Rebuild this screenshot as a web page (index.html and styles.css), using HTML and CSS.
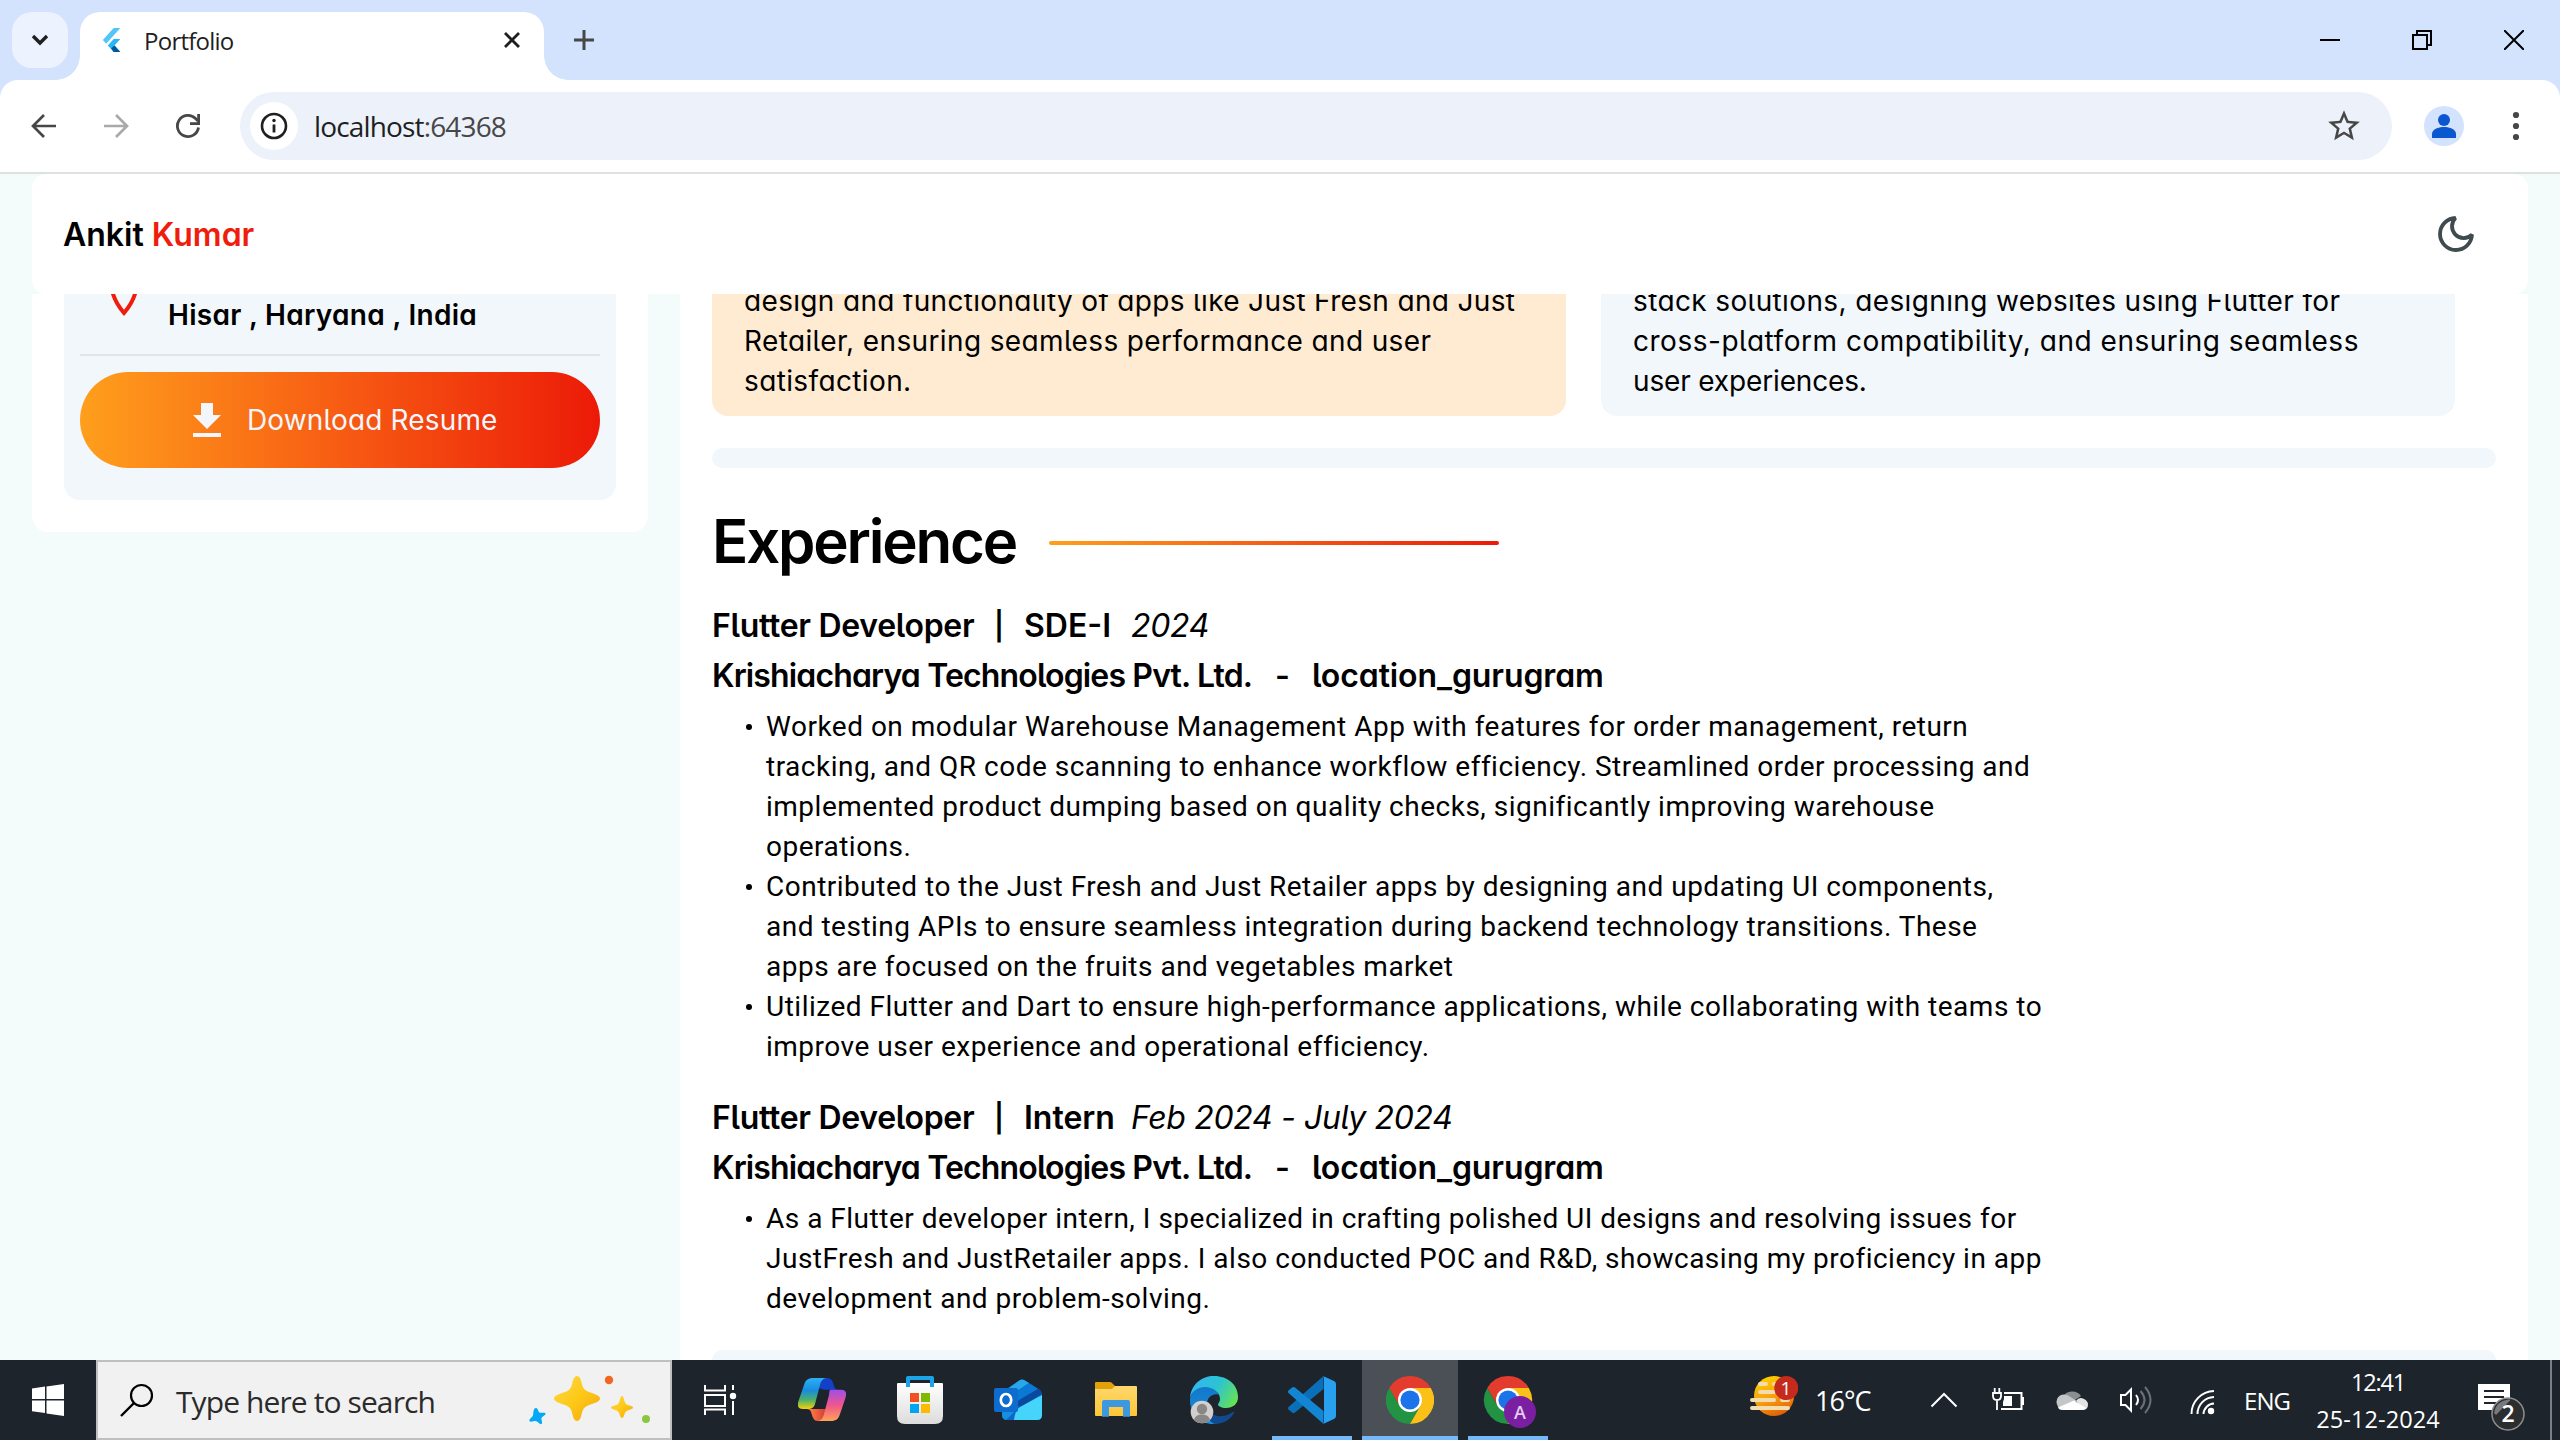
FILE: index.html
```
<!DOCTYPE html>
<html lang="en">
<head>
<meta charset="utf-8">
<title>Portfolio</title>
<link rel="stylesheet" href="styles.css">
</head>
<body>

<header class="browser">
  <div class="tabstrip">
    <button class="tab-search" aria-label="Search tabs"><svg width="20" height="14" viewBox="0 0 20 14"><path d="M3 3l7 7 7-7" fill="none" stroke="#1f1f1f" stroke-width="3.4"/></svg></button>
    <div class="tab">
      <svg class="favicon" width="20" height="24" viewBox="0 0 24 26" preserveAspectRatio="none"><path d="M14 0h8L5 17l-4-4z" fill="#54c5f8"/><path d="M14 12h8l-7 7 7 7h-8l-7-7z" fill="#29b6f6"/><path d="M11 22l4-3 7 7h-8z" fill="#01579b"/></svg>
      <span class="tab-title">Portfolio</span>
      <svg class="tab-close" width="16" height="16" viewBox="0 0 16 16"><path d="M1 1l14 14M15 1L1 15" stroke="#1f1f1f" stroke-width="2.8"/></svg>
    </div>
    <svg class="new-tab" width="20" height="20" viewBox="0 0 20 20"><path d="M10 0v20M0 10h20" stroke="#474747" stroke-width="3"/></svg>
    <div class="window-controls">
      <svg width="20" height="20" viewBox="0 0 20 20"><path d="M0 10h20" stroke="#000" stroke-width="2"/></svg>
      <svg width="20" height="20" viewBox="0 0 20 20"><path d="M1 5h14v14H1zM5 5V1h14v14h-4" fill="none" stroke="#000" stroke-width="2"/></svg>
      <svg width="20" height="20" viewBox="0 0 20 20"><path d="M0 0l20 20M20 0L0 20" stroke="#000" stroke-width="2"/></svg>
    </div>
  </div>
  <div class="toolbar">
    <svg class="nav-back" width="26" height="26" viewBox="0 0 26 26"><path d="M25 13H2.500M13 2L2 13l11 11" fill="none" stroke="#474747" stroke-width="2.700"/></svg>
    <svg class="nav-forward" width="26" height="26" viewBox="0 0 26 26"><path d="M1 13h22.500M13 2l11 11-11 11" fill="none" stroke="#a9a9a9" stroke-width="2.700"/></svg>
    <svg class="nav-reload" width="26" height="26" viewBox="0 0 26 26"><path d="M23.500 14.500A10.600 10.600 0 1 1 20.500 5.500L23 8" fill="none" stroke="#474747" stroke-width="2.800"/><path d="M23.600 1v9.600H15" fill="none" stroke="#474747" stroke-width="2.800"/></svg>
    <div class="omnibox">
      <span class="site-info"><svg width="28" height="28" viewBox="0 0 28 28"><circle cx="14" cy="14" r="12" fill="none" stroke="#1f1f1f" stroke-width="2.600"/><path d="M14 12.500v8" stroke="#1f1f1f" stroke-width="2.800"/><circle cx="14" cy="8.500" r="1.700" fill="#1f1f1f"/></svg></span>
      <span class="url">localhost<span class="port">:64368</span></span>
      <svg class="star" width="38" height="38" viewBox="0 0 24 24"><path d="M22 9.240l-7.190-.620L12 2 9.190 8.630 2 9.240l5.460 4.730L5.820 21 12 17.270 18.180 21l-1.630-7.030L22 9.240zM12 15.400l-3.760 2.270 1-4.280-3.320-2.880 4.380-.380L12 6.100l1.710 4.040 4.380.380-3.320 2.880 1 4.280L12 15.400z" fill="#474747"/></svg>
    </div>
    <svg class="avatar" width="40" height="40" viewBox="0 0 40 40"><circle cx="20" cy="20" r="20" fill="#d3e3fd"/><circle cx="20" cy="14" r="6" fill="#0b57d0"/><path d="M8 32v-4c0-4.500 6-7 12-7s12 2.500 12 7v4z" fill="#0b57d0"/></svg>
    <svg class="menu-dots" width="8" height="30" viewBox="0 0 8 30"><g fill="#474747"><circle cx="4" cy="4" r="3.100"/><circle cx="4" cy="15" r="3.100"/><circle cx="4" cy="26" r="3.100"/></g></svg>
  </div>
</header>

<main class="app">
  <div class="app-bar">
    <div class="brand"><span>Ankit</span> <span class="brand-last">Kumar</span></div>
    <svg width="36" height="36" viewBox="0 0 36 36"><path d="M17.500 2A16 16 0 1 0 34 18.700A11.300 11.300 0 0 1 17.500 2z" fill="none" stroke="#3f4b4f" stroke-width="3.800" stroke-linejoin="bevel"/></svg>
  </div>

  <div class="viewport">
    <aside class="sidebar">
      <div class="profile-card">
        <div class="location">
          <svg width="30" height="40" viewBox="0 0 30 40"><path d="M2 0C2 14 9 25 15 32C21 25 28 14 28 0" fill="none" stroke="#ef1d0d" stroke-width="4"/></svg>
          <span>Hisar , Haryana , India</span>
        </div>
        <div class="rule"></div>
        <a class="download">
          <svg width="28" height="34" viewBox="0 0 28 34"><path d="M8 0h12v12h8L14 26 0 12h8zM0 30h28v4H0z" fill="#f3f6fb"/></svg>
          <span>Download Resume</span>
        </a>
      </div>
    </aside>

    <section class="content">
      <div class="cards">
        <p class="card card-peach">
          <span class="l1">design and functionality of apps like Just Fresh and Just</span>
          <span class="l2">Retailer, ensuring seamless performance and user</span>
          <span class="l2">satisfaction.</span>
        </p>
        <p class="card card-blue">
          <span class="l2">stack solutions, designing websites using Flutter for</span>
          <span class="l3">cross-platform compatibility, and ensuring seamless</span>
          <span class="l4">user experiences.</span>
        </p>
      </div>
      <div class="band"></div>

      <div class="heading"><h1>Experience</h1><i class="heading-line"></i></div>

      <article class="job">
        <h2><span class="role">Flutter Developer</span><span class="bar">|</span><span class="level">SDE-I</span><em>2024</em></h2>
        <h3><span class="company">Krishiacharya Technologies Pvt. Ltd.</span><span class="dash">-</span><span class="place">location_gurugram</span></h3>
        <ul>
          <li>Worked on modular Warehouse Management App with features for order management, return<br>tracking, and QR code scanning to enhance workflow efficiency. Streamlined order processing and<br>implemented product dumping based on quality checks, significantly improving warehouse<br>operations.</li>
          <li>Contributed to the Just Fresh and Just Retailer apps by designing and updating UI components,<br>and testing APIs to ensure seamless integration during backend technology transitions. These<br>apps are focused on the fruits and vegetables market</li>
          <li>Utilized Flutter and Dart to ensure high-performance applications, while collaborating with teams to<br>improve user experience and operational efficiency.</li>
        </ul>
      </article>

      <article class="job">
        <h2><span class="role">Flutter Developer</span><span class="bar">|</span><span class="level">Intern</span><em>Feb 2024 - July 2024</em></h2>
        <h3><span class="company">Krishiacharya Technologies Pvt. Ltd.</span><span class="dash">-</span><span class="place">location_gurugram</span></h3>
        <ul>
          <li>As a Flutter developer intern, I specialized in crafting polished UI designs and resolving issues for<br>JustFresh and JustRetailer apps. I also conducted POC and R&amp;D, showcasing my proficiency in app<br>development and problem-solving.</li>
        </ul>
      </article>
      <div class="band band-last"></div>
    </section>
  </div>
</main>

<footer class="taskbar">
  <div class="start"><svg width="32" height="32" viewBox="0 0 32 32"><path d="M0 4.500L13 2.600V15H0zM14.500 2.400L32 0v15H14.500zM0 16.500h13v12.600L0 27.300zM14.500 16.500H32V32l-17.500-2.500z" fill="#fff"/></svg></div>
  <div class="search">
    <svg width="34" height="34" viewBox="0 0 34 34"><circle cx="21.500" cy="12.500" r="10.500" fill="none" stroke="#000" stroke-width="2.200"/><path d="M14 20L1 33" stroke="#000" stroke-width="2.400"/></svg>
    <span>Type here to search</span>
    <svg class="sparkles" width="122" height="50" viewBox="0 0 122 50">
      <defs><linearGradient id="gold" x1="0" y1="0" x2="1" y2="1"><stop offset="0" stop-color="#ffd84a"/><stop offset=".5" stop-color="#fdc918"/><stop offset="1" stop-color="#f2a60c"/></linearGradient></defs>
      <path d="M49 1c3 0 4 4 5 8.500 1 4 3 6 7 7.500 6 2 11 3.500 11 6.500s-5 4.500-11 6.500c-4 1.500-6 3.500-7 7.500-1 4.500-2 8.500-5 8.500s-4-4-5-8.500c-1-4-3-6-7-7.500-6-2-11-3.500-11-6.500s5-4.500 11-6.500c4-1.500 6-3.500 7-7.500C45 5 46 1 49 1z" fill="url(#gold)"/>
      <path d="M94 21c2 0 2 6 4 8s7 1.500 7 3.500-5 2-7 4-2 6.500-4 6.500-2-4.500-4-6.500-7-2-7-4 5-1.500 7-3.500 2-8 4-8z" fill="url(#gold)"/>
      <path d="M8 33c2 0 2 3.500 3.500 4.500s5.500-.5 6 1-3.500 3-4 4.500 1.500 5 0 6-4-3-6-3-5 1.500-6 0 3-4 3.500-5.500S5 33 8 33z" fill="#03a9f4"/>
      <circle cx="81" cy="5" r="4.200" fill="#f26522"/><circle cx="118" cy="44" r="4" fill="#8cc63f"/>
    </svg>
  </div>
  <div class="task-view"><svg width="34" height="32" viewBox="0 0 34 32"><path d="M2 1v5.500h20V1M2 11h20v11H2zM2 31v-5.500h20V31M30 1v5M30 17v14" fill="none" stroke="#fff" stroke-width="2"/><circle cx="30" cy="12" r="3.200" fill="#fff"/></svg></div>

  <nav class="apps">
    <div class="app-icon"><svg width="48" height="48" viewBox="0 0 48 48">
      <defs>
        <linearGradient id="cp1" x1="0" y1="0" x2="0" y2="1"><stop offset="0" stop-color="#2bb0f5"/><stop offset=".4" stop-color="#1a8be0"/><stop offset=".7" stop-color="#4bb06a"/><stop offset="1" stop-color="#f7d20a"/></linearGradient>
        <linearGradient id="cp2" x1="0" y1="0" x2="0" y2="1"><stop offset="0" stop-color="#a04ee8"/><stop offset=".5" stop-color="#f0568c"/><stop offset="1" stop-color="#ffa356"/></linearGradient>
        <linearGradient id="cp3" x1="0" y1="0" x2="1" y2="0"><stop offset="0" stop-color="#ff8a45"/><stop offset="1" stop-color="#d83a35"/></linearGradient>
      </defs>
      <path d="M24 2h5c5 0 6 4 7 8 1 3 2 3.500 4 3.700H26L20 12z" fill="#1440c8"/>
      <path d="M28 33H9c4 .5 4 3 5 6 1.500 5 3 6 7 6h5z" fill="url(#cp3)"/>
      <path d="M15 2h14c-4 0-6 3-7 7l-5 19c-1 4-4 5-7 5H5c-5 0-6-3-4.500-8L6 9c1.500-5 4-7 9-7z" fill="url(#cp1)"/>
      <path d="M33 13.700h10c5 0 6 3 4.500 8L42 38c-1.500 5-4 7-9 7H19c4 0 6-3 7-7l5-19c.5-3 0-5.300 2-5.300z" fill="url(#cp2)"/></svg></div>
    <div class="app-icon"><svg width="48" height="48" viewBox="0 0 48 48">
      <defs><linearGradient id="st" x1="0" y1="0" x2="0" y2="1"><stop offset="0" stop-color="#fff"/><stop offset="1" stop-color="#dcdcdc"/></linearGradient></defs>
      <path d="M1 8q0-1 1-1h44q1 0 1 1v32q0 8-8 8H9q-8 0-8-8z" fill="url(#st)"/>
      <path d="M12 11V2h24v9" fill="none" stroke="#1ba5e8" stroke-width="4" stroke-linejoin="round"/>
      <path d="M14 17h9v9h-9z" fill="#f25022"/><path d="M25 17h9v9h-9z" fill="#7fba00"/><path d="M14 28h9v9h-9z" fill="#00a4ef"/><path d="M25 28h9v9h-9z" fill="#ffb900"/></svg></div>
    <div class="app-icon"><svg width="48" height="48" viewBox="0 0 48 48">
      <path d="M8 16L26 4q2-1 4 0l16 10q2 2 2 5v20q0 5-5 5H13q-5 0-5-5z" fill="#1066c8"/>
      <path d="M12 14L26 4q2-1 4 0l5 3-22 15z" fill="#28a8ea"/><path d="M35 7l9 6-22 17-8-8z" fill="#0a78d4"/><path d="M44 13q4 2 4 5L26 31l-6-4z" fill="#0a4a9c"/>
      <path d="M8 28l12 8-8 8q-4-1-4-5z" fill="#1490df"/><path d="M48 19v20q0 5-5 5H20q1-10 6-13z" fill="#45d5fb"/>
      <rect y="12" width="24" height="24" rx="2" fill="#0f6ccf"/><ellipse cx="12" cy="24" rx="5.200" ry="6" fill="none" stroke="#fff" stroke-width="2.700"/></svg></div>
    <div class="app-icon"><svg width="48" height="48" viewBox="0 0 48 48">
      <defs><linearGradient id="fo" x1="0" y1="0" x2="0" y2="1"><stop offset="0" stop-color="#ffd76e"/><stop offset="1" stop-color="#fcc636"/></linearGradient></defs>
      <path d="M3 7q0-1 1-1h14q1.500 0 3 2l2 2v7H3z" fill="#e3a008"/><path d="M3 13h17l3-3h21q1 0 1 1v28q0 1-1 1H4q-1 0-1-1z" fill="url(#fo)"/>
      <path d="M10 26q0-2 2-2h24q2 0 2 2v14.700h-7V31H17v9.700h-7z" fill="#3e98e0"/></svg></div>
    <div class="app-icon"><svg width="48" height="48" viewBox="0 0 48 48">
      <defs>
        <linearGradient id="e1" x1="0" y1=".3" x2="1" y2=".7"><stop offset="0" stop-color="#35b6f0"/><stop offset=".5" stop-color="#2cc3d2"/><stop offset="1" stop-color="#67e352"/></linearGradient>
        <linearGradient id="e2" x1="0" y1="0" x2="0" y2="1"><stop offset="0" stop-color="#1277c8"/><stop offset="1" stop-color="#1a8fe0"/></linearGradient>
      </defs>
      <path d="M0 23C2 14 8 10 15 10c7 0 12 4 13.500 8.500C23 17 17 21 17 28c0 10 9 16 16 15-3 3-6 5-10 5C10 48 0 38 0 24z" fill="url(#e2)"/>
      <path d="M17 28c0 8 7 13 15 12 5 0 9-3 11-4 1-.5 1.500.5 1 1-4 7-11 11-19 11-7-2-10-12-8-20z" fill="#124a90"/>
      <path d="M0 22C1 8 12 0 24 0c14 0 24 9 24 21 0 7-5 11-12 11-5 0-8-2-8-3.500 0-1 2-2.500 2-5.500 0-7-7-12-15-12C8 11 2 15 0 22z" fill="url(#e1)"/>
      <circle cx="12" cy="36" r="11.300" fill="#d2d0ce"/><circle cx="12" cy="33" r="5.200" fill="#8a8886"/><path d="M4 44c1-4 4-5.500 8-5.500s7 1.500 8 5.500c-4 4.300-12 4.300-16 0z" fill="#8a8886"/></svg></div>
    <div class="app-icon running"><svg width="48" height="48" viewBox="0 0 48 48">
      <path d="M35.500 0v13L7 36.500q-1.500 1-3 0L.5 33.500q-1-1.200 0-2.500z" fill="#0a6fb8"/>
      <path d="M35.500 48V35L7 11.500q-1.500-1-3 0L.5 14.500q-1 1.200 0 2.500z" fill="#1286d2"/>
      <path d="M35 0l11 5q2 1 2 3v32q0 2-2 3l-11 5q1-.5 1-2V2q0-1.500-1-2z" fill="#27a0f0"/></svg></div>
    <div class="app-icon running active"><svg width="48" height="48" viewBox="0 0 48 48">
      <path d="M3.200 12A24 24 0 0 1 44.800 12H24L13.600 30z" fill="#e33b2e"/><path d="M3.200 12L13.600 30H34.400L24 48A24 24 0 0 1 3.200 12z" fill="#229342"/><path d="M24 12H44.800A24 24 0 0 1 24 48L34.400 30z" fill="#fbc116"/>
      <circle cx="24" cy="24" r="12" fill="#fff"/><circle cx="24" cy="24" r="9.600" fill="#1a73e8"/></svg></div>
    <div class="app-icon running"><svg width="56" height="56" viewBox="-4 -4 56 56">
      <path d="M3.200 12A24 24 0 0 1 44.800 12H24L13.600 30z" fill="#e33b2e"/><path d="M3.200 12L13.600 30H34.400L24 48A24 24 0 0 1 3.200 12z" fill="#229342"/><path d="M24 12H44.800A24 24 0 0 1 24 48L34.400 30z" fill="#fbc116"/>
      <circle cx="24" cy="24" r="12" fill="#fff"/><circle cx="24" cy="24" r="9.600" fill="#1a73e8"/>
      <circle cx="36" cy="36" r="16" fill="#7b1fa2"/><text x="36" y="42.500" text-anchor="middle" class="badge-a">A</text></svg></div>
  </nav>

  <div class="tray">
    <svg class="weather" width="48" height="80" viewBox="0 0 48 80">
      <defs><linearGradient id="sun" x1=".3" y1="0" x2=".7" y2="1"><stop offset="0" stop-color="#ffd000"/><stop offset=".55" stop-color="#f79a10"/><stop offset="1" stop-color="#e05a06"/></linearGradient></defs>
      <circle cx="24" cy="36" r="20" fill="url(#sun)"/><path d="M10 24h6M24 24h3M10 32h14M2 40h22M32 40h6M2 48h36" stroke="#f3dcae" stroke-width="4" stroke-linecap="round"/>
      <circle cx="36.300" cy="28" r="12" fill="#c42b1c"/><text x="36" y="35" text-anchor="middle" class="badge-1">1</text></svg>
    <span class="temp">16°C</span>
    <svg class="chevron" width="32" height="80" viewBox="0 0 32 80"><path d="M3.500 46.500L16 34l12.500 12.500" fill="none" stroke="#fff" stroke-width="2"/></svg>
    <svg class="battery" width="36" height="80" viewBox="0 0 36 80"><path d="M14 33h17.500v16H11" fill="none" stroke="#fff" stroke-width="2"/><path d="M32 37h2v8h-2zM14 36h8v10h-9v-4l1-3z" fill="#fff"/><path d="M4.700 28v4M9.300 28v4M3 33h8v3q0 4-4 4t-4-4zM7 40v10" fill="none" stroke="#fff" stroke-width="1.800"/></svg>
    <svg class="cloud" width="36" height="80" viewBox="0 0 36 80"><path d="M9 37a10 9 0 0 1 18-1l-9 6z" fill="#8b8e91"/><path d="M10 50a8 8 0 0 1-4-14.500q4-2 8 0L23 41 6 48z" fill="#c3c5c7"/><path d="M22 41q3-4.500 8-2 4 2 4 5.500 0 5-5 5.500z" fill="#e2e3e4"/><path d="M4 47.500L20 40.500 32 48q-1 2-4 2H9q-4 0-5-2.500z" fill="#fff"/></svg>
    <svg class="speaker" width="36" height="80" viewBox="0 0 36 80"><path d="M3 35h4.500L13 29.500v21L7.500 45H3z" fill="none" stroke="#fff" stroke-width="2"/><path d="M18 35q4 5 0 10" fill="none" stroke="#fff" stroke-width="2"/><path d="M22.500 31q8 9 0 18M27 27q11 13 0 26" fill="none" stroke="#6b7075" stroke-width="2"/></svg>
    <svg class="wifi" width="28" height="80" viewBox="0 0 28 80"><path d="M3.500 54A23 23 0 0 1 26 31M9.500 54A17 17 0 0 1 26 37M15.500 54A11 11 0 0 1 26 43.500" fill="none" stroke="#fff" stroke-width="2"/><circle cx="23" cy="51" r="3.200" fill="#fff"/></svg>
    <span class="lang">ENG</span>
    <div class="clock"><span class="time">12:41</span><span class="date">25-12-2024</span></div>
    <svg class="notices" width="50" height="80" viewBox="0 0 50 80"><path d="M2 24h32v26H22v6l-6-6H2z" fill="#fff"/><path d="M8 31h20M8 37h20M8 43h12" stroke="#1d242b" stroke-width="2"/><circle cx="32" cy="54" r="16" fill="#2b2d2f" stroke="#8d8f91" stroke-width="1.500"/><path d="M18 53q2-12 14-13.500l2 0v1L20 55z" fill="#77797b"/><text x="32" y="62" text-anchor="middle" class="badge-2">2</text></svg>
    <i class="show-desktop"></i>
  </div>
</footer>
</body>
</html>
```

FILE: styles.css
```
* { box-sizing: border-box; }
body {
  margin: 0; width: 2560px; height: 1440px; overflow: hidden;
  display: grid; grid-template-rows: 174px 1186px 80px;
  background: #f4fbfb; color: #000;
  font-family: "Open Sans", "Noto Sans", sans-serif;
}
svg { display: block; flex: none; }
h1, h2, h3, p, ul { margin: 0; padding: 0; }

/* Browser frame */
.browser { background: #d3e3fd; display: grid; grid-template-rows: 80px 94px; }
.tabstrip { display: flex; align-items: flex-start; padding-left: 12px; }
.tab-search {
  width: 56px; height: 56px; margin: 12px 12px 0 0; padding: 0; border: 0; border-radius: 20px;
  background: #ecf2fe; display: flex; align-items: center; justify-content: center;
}
.tab {
  position: relative; width: 464px; height: 68px; margin-top: 12px; padding: 0 24px 12px 22px;
  border-radius: 20px 20px 0 0; background: #fff; display: flex; align-items: center;
}
.tab::before, .tab::after { content: ""; position: absolute; bottom: 0; width: 24px; height: 24px; }
.tab::before { left: -24px; background: radial-gradient(circle at 0 0, transparent 23.5px, #fff 24px); }
.tab::after { right: -24px; background: radial-gradient(circle at 100% 0, transparent 23.5px, #fff 24px); }
.tab-title { margin-left: 22px; font-size: 24px; line-height: 32px; letter-spacing: -.75px; color: #1f1f1f; padding-top: 2px; }
.tab-close { margin-left: auto; }
.new-tab { margin: 30px 0 0 30px; }
.window-controls { margin: 30px 36px 0 auto; display: flex; gap: 72px; }
.toolbar {
  background: #fff; border-radius: 18px 18px 0 0; border-bottom: 2px solid #dfe0e1;
  display: flex; align-items: center; padding: 0 40px 0 31px;
}
.nav-forward { margin-left: 46px; }
.nav-reload { margin-left: 46px; }
.omnibox {
  width: 2152px; height: 68px; margin-left: 39px; border-radius: 34px; background: #ecf1fa;
  display: flex; align-items: center; padding: 0 29px 0 10px;
}
.site-info { width: 48px; height: 48px; border-radius: 50%; background: #fff; display: flex; align-items: center; justify-content: center; }
.url { margin-left: 16px; font-size: 28px; line-height: 40px; letter-spacing: -.85px; color: #1f1f1f; }
.port { color: #474747; }
.star { margin-left: auto; }
.avatar { margin-left: 32px; }
.menu-dots { margin-left: auto; }

/* Page */
.app { display: grid; grid-template-rows: 120px 1066px; font-family: Inter, sans-serif; font-feature-settings: "cv11", "cv05"; }
.app-bar {
  margin: 0 32px; padding: 0 54px 0 31px; border-radius: 14px; background: #fff;
  display: flex; align-items: center; justify-content: space-between;
}
.brand { font-size: 32px; font-weight: 600; line-height: 40px; padding-top: 2px; letter-spacing: 0; }
.brand-last { color: #ef1d0d; }
.viewport { overflow: hidden; padding: 0 32px; display: flex; gap: 32px; align-items: flex-start; }

.sidebar { width: 616px; height: 238px; padding: 0 32px 32px; background: #fff; border-radius: 0 0 16px 16px; }
.profile-card { height: 206px; padding: 0 16px; background: #f2f7fb; border-radius: 0 0 16px 16px; }
.location { height: 60px; padding-left: 29px; display: flex; gap: 29px; font-size: 28px; font-weight: 600; letter-spacing: .3px; line-height: 40px; }
.location svg { margin-top: -13px; }
.location span { padding-top: 1px; }
.rule { height: 2px; background: #e1e4e8; }
.download {
  height: 96px; margin-top: 16px; padding-left: 113px; border-radius: 48px; color: #f3f6fb;
  background: linear-gradient(90deg, #ff9f1c, #f75c13 50%, #ec1a08);
  display: flex; align-items: center; gap: 26px; font-size: 28px; letter-spacing: .15px;
}

.content { width: 1848px; height: 1066px; padding: 0 32px; background: #fff; }
.cards { display: flex; gap: 35px; height: 122px; overflow: hidden; }
.card { width: 854px; height: 136px; margin-top: -14px; padding: 1px 32px 0; border-radius: 0 0 16px 16px; font-size: 28px; line-height: 40px; white-space: nowrap; }
.card span { display: block; }
.card-peach { background: #ffebd2; }
.card-blue { background: #f2f7fb; }
.l1 { letter-spacing: .33px; }
.l2 { letter-spacing: .37px; }
.l3 { letter-spacing: .52px; }
.l4 { letter-spacing: -.15px; }
.band { height: 20px; margin-top: 32px; border-radius: 10px; background: #f2f7fb; }
.heading { height: 80px; margin: 32px 0 20px; display: flex; align-items: center; }
.heading h1 { width: 337px; font-size: 60px; font-weight: 600; line-height: 80px; padding-top: 1px; letter-spacing: -2.2px; }
.heading-line { width: 450px; height: 4px; margin-top: 6px; border-radius: 2px; background: linear-gradient(90deg, #ff9f1c, #f75c13 50%, #ec1a08); }

.job { padding-top: 1px; margin-bottom: 25px; }
.job h2, .job h3 { display: flex; font-size: 32px; line-height: 50px; font-weight: 600; white-space: nowrap; }
.role { width: 282px; letter-spacing: -.3px; }
.bar { width: 30px; font-size: 28px; }
.level { width: 107px; }
.job em { font-weight: 400; letter-spacing: -.35px; }
.company { width: 563px; letter-spacing: -.85px; }
.dash { width: 37px; }
.place { letter-spacing: -.1px; }
.job ul { list-style: none; margin-top: 6px; font-family: Roboto, sans-serif; font-size: 28px; line-height: 40px; letter-spacing: .5px; }
.job li { position: relative; padding-left: 54px; white-space: nowrap; }
.job li::before { content: ""; position: absolute; left: 34px; top: 17px; width: 6px; height: 6px; border-radius: 50%; background: #000; }
.job:last-of-type { margin-bottom: 0; }
.band-last { margin-top: 31px; }

/* Taskbar */
.taskbar { background: #1d242b; color: #fff; display: flex; }
.start { width: 96px; display: flex; align-items: center; justify-content: center; }
.search {
  width: 576px; background: #f1f1f1; border: 2px solid #bfbfbf; color: #2b2b2b;
  display: flex; align-items: center; padding: 0 20px 0 22px;
}
.search span { margin-left: 22px; font-size: 30px; line-height: 40px; letter-spacing: -.9px; padding-top: 4px; }
.sparkles { margin-left: auto; }
.task-view { width: 96px; display: flex; align-items: center; justify-content: center; }
.apps { margin-left: 5px; display: grid; grid-template-columns: repeat(8, 98px); }
.app-icon { display: flex; align-items: center; justify-content: center; margin: 0 1px; }
.running { background: linear-gradient(#76b9f8, #76b9f8) 50% 100% / 80px 4px no-repeat; }
.active { background: linear-gradient(#76b9f8, #76b9f8) 50% 100% / 96px 4px no-repeat, #4b5057; }
.badge-a { font: 600 18px "Open Sans", sans-serif; fill: #e6cdf0; }
.badge-1 { font: 400 19px "Open Sans", sans-serif; fill: #fff; }
.badge-2 { font: 600 23px "Open Sans", sans-serif; fill: #fff; }

.tray { margin-left: auto; display: flex; align-items: center; white-space: nowrap; }
.temp { width: 57px; margin-left: 17px; font-size: 27px; letter-spacing: -1px; line-height: 40px; padding-top: 2px; }
.chevron { margin-left: 56px; }
.battery { margin-left: 30px; }
.cloud, .speaker { margin-left: 28px; }
.wifi { margin-left: 34px; }
.lang { width: 50px; margin-left: 28px; font-size: 24px; letter-spacing: -.9px; line-height: 40px; padding-top: 1px; }
.clock { width: 124px; margin-left: 22px; padding-top: 2px; display: flex; flex-direction: column; align-items: center; font-size: 23.5px; line-height: 37px; }
.time { letter-spacing: -1.2px; }
.date { letter-spacing: .1px; }
.notices { margin-left: 36px; }
.show-desktop { width: 2px; height: 80px; margin: 0 8px 0 24px; background: #7c8084; }
```
